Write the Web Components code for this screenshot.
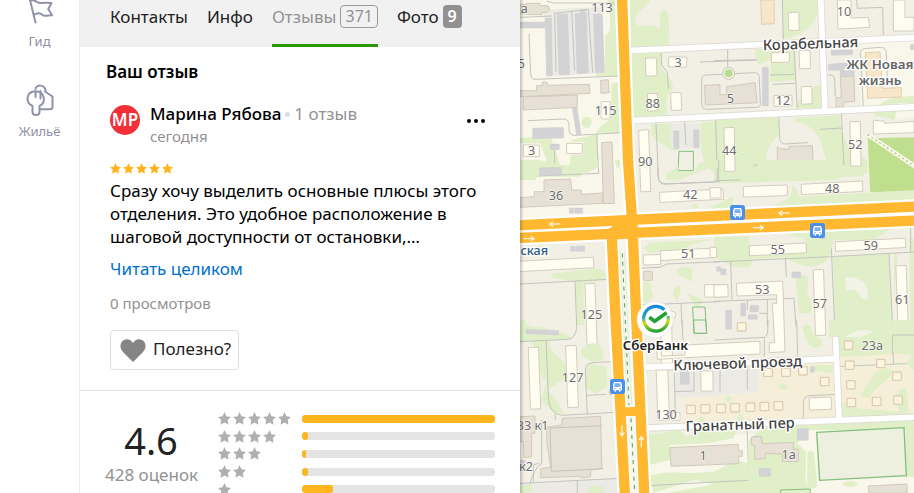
<!DOCTYPE html>
<html lang="ru">
<head>
<meta charset="utf-8">
<title>Отзывы</title>
<style>
html, body { height: 100%; }
body { margin: 0; overflow: hidden; font-family: "Noto Sans", "Open Sans", sans-serif; font-size: 17px; color: #000; background: #fff; }
</style>
</head>
<body>
<app-shell>
  <side-nav slot="nav">
    <nav-item label="Гид" icon="flag"></nav-item>
    <nav-item label="Жильё" icon="keys"></nav-item>
  </side-nav>
  <tab-bar slot="tabs">
    <tab-link>Контакты</tab-link>
    <tab-link>Инфо</tab-link>
    <tab-link active count="371">Отзывы</tab-link>
    <tab-link count="9">Фото</tab-link>
  </tab-bar>
  <review-card slot="content" initials="МР" author="Марина Рябова" total="1 отзыв" date="сегодня">
    Сразу хочу выделить основные плюсы этого отделения. Это удобное расположение в шаговой доступности от остановки,…
  </review-card>
  <rating-summary slot="content" value="4.6" votes="428 оценок"></rating-summary>
  <city-map slot="map"></city-map>
</app-shell>

<script>
const define = (name, render) => customElements.define(name, class extends HTMLElement {
  constructor() {
    super();
    this.attachShadow({ mode: "open" });
  }
  connectedCallback() {
    this.shadowRoot.innerHTML = render(this);
  }
});

define("app-shell", () => `
<style>
:host { display: grid; grid-template-columns: 80px 440px minmax(0, 1fr); height: 100vh; overflow: hidden; }
aside { border-right: 1px solid #ececef; }
main { min-width: 0; overflow: hidden; background: #fff; }
.map { position: relative; overflow: hidden; min-width: 0; }
.map::before { content: ""; position: absolute; z-index: 1; inset: 0 auto 0 0; width: 4px; background: linear-gradient(90deg, rgba(0,0,0,.22), rgba(0,0,0,0)); }
</style>
<aside><slot name="nav"></slot></aside>
<main><slot name="tabs"></slot><slot name="content"></slot></main>
<div class="map"><slot name="map"></slot></div>`);

define("side-nav", () => `
<style>
:host { display: block; overflow: hidden; }
nav { display: flex; flex-direction: column; gap: 30px; margin-top: -10px; }
</style>
<nav aria-label="Разделы"><slot></slot></nav>`);

const navIcons = {
  flag: `<path d="M7.500 7 L13.500 31.500 M8 10 C12 7 15 12.500 19 12 C22 11.500 25 11.700 29.500 12 L26.300 18 L30 24.300 C27 24 24.500 25.500 21.500 24.500 C18.500 22.500 16.500 21 11.500 24"/>`,
  keys: `<path d="M13.500 8 C14 3.500 22.500 3 23.500 9.500 M18.500 10 V17.500 M10.500 25 V31 C10.500 35 17.500 35 17.500 31 V25 M10.500 25 C3 21.500 4 10.500 13.500 10.300 C23 10.500 24.500 21.500 17.500 25 M13.500 10.500 V16 M17.500 28.300 H28 C30 28.300 30.500 27.500 30.500 26 V15.500 L23 10.500"/>`
};
define("nav-item", el => `
<style>
:host { display: block; }
a { display: flex; flex-direction: column; align-items: center; color: #8e91a5; font-size: 13px; line-height: 18px; text-decoration: none; gap: 6px; }
svg { width: 36px; height: 36px; overflow: visible; fill: none; stroke: #9092ab; stroke-width: 2; stroke-linejoin: round; stroke-linecap: round; }
</style>
<a href="#"><svg viewBox="0 -1 36 36" aria-hidden="true">${navIcons[el.getAttribute("icon")]}</svg><span>${el.getAttribute("label")}</span></a>`);

define("tab-bar", () => `
<style>
:host { display: block; background: #f1f1f1; }
nav { display: flex; gap: 19px; padding: 0 30px; height: 47px; }
</style>
<nav aria-label="Карточка места"><slot></slot></nav>`);

define("tab-link", el => {
  const count = el.getAttribute("count");
  return `
<style>
:host { display: flex; }
a { display: flex; gap: 4px; box-sizing: border-box; padding: 5px 0 0; color: #222; text-decoration: none; line-height: 23px; border-bottom: 3px solid transparent; }
:host([active]) a { color: #929292; border-color: #2a9608; }
b { box-sizing: border-box; height: 23px; padding: 0 5px; border-radius: 4px; background: #919191; color: #fff; font-size: 16px; font-weight: 600; }
:host([active]) b { padding: 0 4px; border: 1px solid #999; background: none; color: #929292; line-height: 21px; font-weight: 400; }
</style>
<a href="#"><span><slot></slot></span>${count ? `<b>${count}</b>` : ""}</a>`;
});

const star = "M5 0 L6.500 3.300 L10 3.800 L7.500 6.200 L8.100 9.800 L5 8 L1.900 9.800 L2.500 6.200 L0 3.800 L3.500 3.300 Z";
define("star-row", el => {
  const count = Number(el.getAttribute("count"));
  return `
<style>
:host { display: flex; gap: var(--star-gap, 2px); color: #b0b0b0; }
svg { display: block; width: var(--star-size, 13px); height: var(--star-size, 13px); fill: currentColor; }
</style>${`<svg viewBox="0 0 10 10" aria-hidden="true"><path d="${star}"/></svg>`.repeat(count)}`;
});

define("review-card", el => `
<style>
:host { display: block; border-bottom: 1px solid #e3e3e3; }
h2 { margin: 0; padding: 13px 26px 0; font-size: 17px; line-height: 24px; font-weight: 600; }
article { padding: 18px 30px 20px; }
header { display: grid; grid-template-columns: 30px 1fr auto; column-gap: 10px; align-items: start; }
.avatar { display: grid; place-items: center; height: 30px; margin-top: 3px; border-radius: 50%; background: #f33038; color: #fff; font-size: 17px; line-height: 20px; font-weight: 600; }
.name { line-height: 24px; font-weight: 500; white-space: nowrap; }
.name span { color: #929292; font-weight: 400; }
.name i { display: inline-block; width: 5px; height: 5px; margin: 0 4px 3px; border-radius: 50%; background: #ddd; }
time { display: block; line-height: 20px; color: #929292; font-size: 15px; }
button { font: inherit; cursor: pointer; }
.more { display: flex; gap: 3px; margin: 13px 1px 0 0; padding: 4px; border: 0; background: none; }
.more span { width: 4px; height: 4px; border-radius: 50%; background: #000; }
star-row { --star-size: 11px; --star-gap: 2px; color: #ffb31c; margin: 17px 0 5px; }
p { margin: 0; line-height: 23px; }
a { display: block; width: max-content; margin-top: 9px; line-height: 23px; color: #0070cc; text-decoration: none; }
.views { margin-top: 13px; color: #929292; font-size: 15px; line-height: 20px; }
.useful { display: flex; align-items: center; gap: 7px; height: 40px; margin-top: 17px; padding: 0 7px 3px 9px; border: 1px solid #dedede; border-radius: 4px; background: #fff; color: #222; }
.useful svg { width: 26px; height: 24px; fill: #858585; margin-top: 4px; }
</style>
<h2>Ваш отзыв</h2>
<article>
  <header>
    <div class="avatar">${el.getAttribute("initials")}</div>
    <div><div class="name">${el.getAttribute("author")}<i></i><span>${el.getAttribute("total")}</span></div><time>${el.getAttribute("date")}</time></div>
    <button class="more" aria-label="Ещё"><span></span><span></span><span></span></button>
  </header>
  <star-row count="5" role="img" aria-label="5 из 5"></star-row>
  <p><slot></slot></p>
  <a href="#">Читать целиком</a>
  <div class="views">0 просмотров</div>
  <button class="useful"><svg viewBox="0 0 26 24" aria-hidden="true"><path d="M13 23 L3 13 C-1 9 0 3 4 1 C8 -1 11 1 13 4 C15 1 18 -1 22 1 C26 3 27 9 23 13 Z"/></svg>Полезно?</button>
</article>`);

define("rating-summary", el => `
<style>
:host { display: grid; grid-template-columns: 92px 1fr; column-gap: 21px; padding: 19px 25px 0; }
.score { text-align: center; white-space: nowrap; padding-top: 7px; }
strong { display: block; font-size: 38px; line-height: 46px; font-weight: 400; color: #222; }
small { display: block; font-size: 17px; line-height: 24px; color: #929292; }
ul { display: grid; grid-template-rows: repeat(5, 1fr); height: 88px; margin: 0; padding: 0; list-style: none; }
li { display: grid; grid-template-columns: 74px 1fr; column-gap: 10px; align-items: center; }
.bar { height: 8px; border-radius: 3px; background: #e4e4e4; overflow: hidden; }
.bar div { height: 100%; border-radius: 3px; background: #ffb61c; }
</style>
<div class="score"><strong>${el.getAttribute("value")}</strong><small>${el.getAttribute("votes")}</small></div>
<ul>${[[5, 100], [4, 3], [3, 2], [2, 3], [1, 16]].map(([n, w]) => `<li><star-row count="${n}"></star-row><div class="bar"><div style="width:${w}%"></div></div></li>`).join("")}</ul>`);

const bus = (x, y) => `<g transform="translate(${x} ${y})"><rect width="45" height="45" rx="8" fill="#4a90e8"/><path d="M12 9 H33 L36 17 V34 H31 V38 H27 V34 H18 V38 H14 V34 H9 V17 Z" fill="#fff"/><path d="M14 13 H31 L32 24 H13 Z" fill="#79aef0"/><path d="M13 28 H17 V31 H13 Z M28 28 H32 V31 H28 Z" fill="#4a90e8"/></g>`;
const arrow = (x, y, turn) => `<path class="arrow" transform="translate(${x} ${y}) rotate(${turn})" d="M-16 0 H16 M6 -7 L16 0 L6 7"/>`;
const box = (cls, list) => `<g class="${cls}">${list.map(([x, y, w, h, r = 0]) => `<rect x="${x}" y="${y}" width="${w}" height="${h}" rx="2" transform="rotate(${r} ${x + w / 2} ${y + h / 2})"/>`).join("")}</g>`;
const houseNumbers = [
  [246, 37, "113"], [13, 40, "а"], [4, 204, "5"], [474, 202, "3"], [398, 323, "88"], [257, 346, "115"], [35, 466, "3"], [376, 497, "90"],
  [972, 49, "10"], [631, 310, "5"], [789, 315, "12"], [628, 464, "44"], [1006, 446, "52"],
  [108, 599, "36"], [511, 598, "42"], [505, 775, "51"], [214, 957, "125"],
  [937, 578, "48"], [773, 763, "55"], [1052, 749, "59"], [727, 881, "53"], [899, 923, "57"], [1147, 911, "61"],
  [158, 1145, "127"], [38, 1291, "33 к1"], [18, 1413, "к2"], [549, 1380, "1"], [438, 1257, "130"],
  [1057, 1049, "23а"], [806, 1377, "1а"]
];

define("city-map", () => `
<style>
:host { display: block; height: 100%; }
svg { display: block; width: 100%; height: 100%; font-family: "Noto Sans", sans-serif; }
.g { fill: #e0efc7; } .park { fill: #c0df8e; } .lt { fill: #f9f7ea; } .sand { fill: #f5efd9; } .gr { fill: #ebeae5; }
.w { fill: #fffdf0; stroke: #d4cdbf; stroke-width: 3; }
.b { fill: #e6e1d4; stroke: #d2cabb; stroke-width: 3; }
.s { fill: #d3d3d6; stroke: #c9c9cc; stroke-width: 1; }
.o { fill: #f8e6c8; stroke: #e5cfae; stroke-width: 3; }
.h { fill: #fdf4df; stroke: #ddcfb5; stroke-width: 4; }
.f { fill: none; stroke: #82c07b; stroke-width: 3; }
.path { fill: none; stroke: #c4c4bf; stroke-width: 3; stroke-linejoin: round; }
.case { fill: none; stroke: #dddbd4; stroke-width: 22; stroke-linecap: round; }
.street { fill: none; stroke: #fff; stroke-width: 17; stroke-linecap: round; }
.halo { fill: none; stroke: #fff; stroke-width: 44; }
.main { fill: none; stroke: #ffb830; stroke-width: 31; }
.arrow { fill: none; stroke: #fff3d5; stroke-width: 4; }
.num { font-size: 38px; fill: #6d6d6d; stroke: #fff; stroke-width: 5; stroke-opacity: .7; paint-order: stroke; text-anchor: middle; }
.label { font-size: 44px; font-weight: 500; fill: #444; stroke: #fff; stroke-width: 8; paint-order: stroke; text-anchor: middle; }
.strong { font-size: 40px; font-weight: 600; }
</style>
<svg viewBox="0 0 1182 1479" preserveAspectRatio="xMinYMin slice" role="img" aria-label="Карта">
<defs><linearGradient id="ring" x1=".3" y1="0" x2=".4" y2="1"><stop offset="0" stop-color="#1387dc"/><stop offset=".4" stop-color="#20a6c8"/><stop offset=".65" stop-color="#d8dd16"/><stop offset="1" stop-color="#2ca338"/></linearGradient></defs>
<rect width="1182" height="1479" fill="#f2f0e4"/>

<g>
<path class="lt" d="M0 0 H306 L330 660 H0 Z"/>
<path class="g" d="M262 0 H292 L297 228 H228 V215 L255 218 V110 L270 90 V20 Z M275 250 L296 245 L300 400 H226 L245 375 L272 358 Z M330 0 H390 C385 20 335 40 348 72 C370 90 385 60 420 88 C420 60 415 32 433 30 C450 38 447 55 447 144 L333 144 Z M335 160 H430 L422 200 C440 230 465 240 458 270 C430 290 440 330 445 350 L338 352 Z M395 372 H462 V440 C490 445 480 450 452 452 C430 430 395 420 395 400 Z M545 365 H582 V470 H600 V530 L560 500 C540 470 535 380 545 365 Z"/>
<ellipse class="g" cx="200" cy="367" rx="15" ry="17"/>
<path class="g" d="M0 415 L90 405 L120 495 H150 L155 420 L232 402 L235 480 L180 530 H0 Z"/>
<path class="lt" d="M0 430 H60 L80 480 L50 520 L0 550 Z M140 425 H190 V465 H140 Z"/>
<path class="gr" d="M70 30 L245 20 L255 218 L80 230 Z M450 372 H540 V445 H455 Z"/>
${box("s", [[78, 54, 18, 173, -1], [0, 66, 75, 18], [114, 42, 32, 182, -2], [168, 40, 34, 180, -2], [181, 30, 16, 22], [223, 42, 27, 176, -2], [163, 322, 14, 82, -9], [38, 383, 93, 32, -1], [91, 432, 27, 17], [461, 392, 16, 54, -1], [521, 389, 16, 54, -1]])}
<path class="b" d="M0 13 H20 V10 H60 V17 H84 L89 28 L82 37 H66 V44 H22 V42 H0 Z M0 272 H50 V257 H66 L68 246 H80 L84 256 L208 253 L210 280 L0 290 Z M10 291 L172 285 V322 L10 330 Z M242 241 L265 239 L268 278 L243 280 Z M245 428 L276 426 L283 610 L250 611 Z M554 256 L600 254 V284 H620 V260 L705 248 L712 308 L556 315 Z"/>
${box("w", [[377, 174, 33, 54, -2], [446, 171, 54, 30, 2], [383, 281, 30, 52, -2], [453, 278, 31, 53, -2], [243, 305, 27, 52], [359, 390, 30, 185, -2], [10, 435, 48, 34, 1], [140, 430, 47, 31, 1]])}
<path class="path" d="M0 52 L95 48 M80 3 L100 9 H290 M108 216 L104 40 L205 28 L218 218 M155 36 L164 212 M27 100 L32 220 Q33 238 45 238 L296 228 M24 362 L130 357 Q146 356 147 376 V390 Q148 406 165 406 L305 398 M230 402 L236 520 L0 530 M104 450 V490 M423 158 L425 195 L441 215 L446 266 M540 186 L712 180 M550 325 Q545 320 545 300 V238 Q545 225 560 225 L704 218 Q718 218 718 235 L721 315 Q720 322 710 322 L560 328 Z M408 370 L415 530 Q416 550 435 552 L600 545 M494 365 L498 435 M588 360 L596 545"/>
<path class="f" d="M477 454 H520 V512 L474 512 Z"/>
</g>

<g transform="translate(582 0)">
<path class="g" d="M205 0 H312 L310 40 C300 80 260 110 205 118 Z M122 147 H245 V240 L168 246 L170 180 L130 196 Z M246 310 L300 260 L325 250 V325 H250 Z M0 360 L190 353 L200 400 C170 430 145 450 165 500 C180 540 390 500 395 525 L370 540 L0 550 Z M240 355 L380 345 C370 400 400 450 460 480 L460 520 H350 C320 450 330 380 245 365 Z M480 340 L500 300 L580 290 L600 330 Z"/>
<path class="lt" d="M440 120 H600 V350 L545 360 L540 325 H440 Z"/>
<path class="g" d="M480 345 C490 290 560 290 600 288 V310 H550 L542 360 Z"/>
<path class="park" d="M461 415 L600 412 V573 L469 577 Z"/>
<path d="M461 404 L604 500" fill="none" stroke="#f6f8e5" stroke-width="14"/><path d="M461 404 L604 500" fill="none" stroke="#a0c783" stroke-width="4" stroke-dasharray="5 9"/>
<circle cx="44" cy="220" r="18" fill="#f4f3e6" stroke="#c4c4bf" stroke-width="3"/><circle cx="44" cy="220" r="12" fill="#b9dc91"/>
<path class="path" d="M205 0 L208 118 M240 145 L250 325 M168 225 L240 223 M175 253 L245 250 M0 182 L130 179 M41 145 V200 M428 0 L430 25 L506 22 L508 105 M343 225 Q362 223 362 240 L364 290 M448 320 L440 160 Q440 145 460 145 L500 142 Q516 142 517 160 L520 240 M194 350 L197 415 Q198 432 215 432 L282 428 M318 388 L384 384 M382 340 L391 525 L0 543 M5 360 L10 540"/>
${box("s", [[145, 202, 18, 116], [351, 150, 65, 15, -2], [589, 133, 20, 16], [120, 494, 14, 17]])}
<path class="s" d="M343 193 L420 186 L421 227 H378 V211 H343 Z"/>
<path class="o" d="M140 0 H180 L181 71 L143 73 Z M454 158 L498 156 L505 265 L562 263 V291 L461 295 Z"/>
<path class="b" d="M379 229 H420 L422 304 L388 307 V321 H366 V293 H382 Z M190 440 L200 447 H226 V439 L295 437 L297 484 L190 489 Z"/>
<path class="w" d="M370 0 H411 V54 L463 52 L467 82 L372 87 Z M538 0 H573 V52 H600 V93 H538 Z M478 361 L510 363 L512 370 L600 364 V398 L478 402 Z"/>
${box("w", [[223, 37, 32, 54, -2], [172, 158, 54, 29, -1], [256, 151, 33, 55, -2], [262, 260, 32, 52, -2], [180, 286, 54, 32, -1], [31, 383, 31, 131, -1], [409, 365, 31, 133, -1]])}
</g>

<g transform="translate(0 480)">
<path class="g" d="M0 10 L90 5 C80 50 50 40 45 60 H0 Z M175 0 H233 L236 20 L190 45 Z M285 0 H300 V20 L290 25 Z M440 40 Q465 30 475 15 V35 H525 L535 10 L595 0 V25 H565 L470 62 L438 58 Z M0 0 H60 L90 10 L50 50 H0 Z M510 139 Q525 122 538 139 Q525 156 510 139 Z M570 140 L640 110 V135 L600 155 Z M370 265 L390 248 L582 238 L510 255 L500 270 L425 272 L390 280 Z M90 342 L230 325 L262 340 L260 360 L170 372 C140 350 100 365 90 342 Z M166 363 H190 L192 495 H170 Z M372 365 H390 L400 410 L380 430 L365 420 Z M470 330 Q490 315 515 325 L518 365 Q480 350 470 340 Z M458 400 Q480 350 482 400 L470 425 Z M500 400 L540 415 L550 425 L530 440 Z"/>
${box("s", [[58, 23, 67, 23, -1], [148, 144, 12, 16], [163, 144, 25, 16], [152, 259, 14, 15], [169, 258, 25, 16]])}
<path class="b" d="M0 113 L43 110 V95 H72 V60 L152 57 L155 90 H184 V103 L248 99 V130 L0 142 Z"/>
${box("b", [[371, 334, 26, 27]])}
<path class="path" d="M413 20 L415 55 Q417 72 435 72 L600 65 M356 325 L420 322 L440 312 L600 305 M0 372 L262 358 M165 365 L170 495 M358 435 L600 425 M483 430 L486 495"/>
${box("w", [[419, 92, 191, 31, -3], [421, 268, 169, 29, -3], [370, 284, 52, 30, -2], [-10, 298, 231, 31, -3], [198, 371, 30, 184, -2], [554, 374, 60, 37, -1]])}
<path class="f" d="M518 441 H555 L560 520 H522 Z"/>
<path class="w" d="M440 455 L450 450 L466 458 V472 L455 476 L458 630 H424 V480 Z"/>
</g>

<g transform="translate(582 480)">
<path class="g" d="M235 75 Q250 85 255 110 L600 90 V130 L160 148 L230 110 Z M80 40 L165 0 H370 L395 20 L450 35 V48 L395 52 L270 60 L80 62 Z M0 230 L105 228 L108 265 L280 250 L270 235 L210 222 L530 205 L480 240 L360 240 L350 280 C320 350 240 310 210 290 L115 300 C115 340 60 325 0 290 Z M357 290 L525 280 L535 500 H362 Z M540 280 L552 290 L545 330 L540 440 Z M245 355 Q270 335 282 355 L280 400 Q300 430 290 460 L255 460 Z M585 235 H600 V495 H590 Z"/>
<path fill="#f3f2e6" d="M393 352 Q425 350 440 362 Q466 372 460 420 L443 415 L425 390 L395 392 Z"/>
<path class="path" d="M0 306 L350 290 L600 276 M14 0 V65 M352 265 L362 500 M525 280 L536 500 M214 292 L217 350 M50 305 L54 420 M0 424 L240 415 L246 500 M590 195 V275 M100 420 V450 M135 460 H160 M160 420 V500"/>
${box("s", [[233, 336, 27, 17], [8, 320, 12, 14], [20, 326, 16, 18], [80, 430, 15, 38], [108, 436, 26, 20], [102, 464, 28, 14], [35, 450, 18, 58], [315, 225, 18, 11]])}
${box("w", [[-12, 83, 33, 31, -2], [88, 77, 132, 32, -2], [262, 68, 184, 31, -3], [106, 253, 171, 30, -3], [364, 240, 211, 28, -3], [-12, 262, 20, 31], [301, 329, 31, 197, -2], [549, 317, 31, 197, -2], [0, 374, 42, 37, -2]])}
<path class="w" d="M67 370 L206 363 L213 575 L166 578 V548 H182 L175 430 H188 V404 L69 408 Z"/>
</g>

<g transform="translate(0 960)">
<path class="gr" d="M0 490 L172 480 L295 475 V519 H0 Z"/>
<path class="lt" d="M378 380 L394 362 L1182 310 V519 H390 Z"/>
<path class="sand" d="M490 233 L945 205 L940 50 L1182 30 V290 L500 318 Z M715 140 L945 120 V210 L715 220 Z"/>
<path class="gr" d="M465 155 L715 140 V215 L465 235 Z"/>
<path class="g" d="M0 0 H15 Q15 25 60 20 L145 45 L155 58 L85 62 C95 110 145 120 150 165 L80 210 C120 240 115 275 140 280 H105 Q70 250 60 240 L80 190 Q50 160 55 100 L30 60 L0 70 Z M182 100 C190 60 250 60 250 100 L248 120 L225 126 Q200 125 182 100 Z M205 130 L260 140 L262 200 L225 223 L195 200 Q200 145 205 130 Z M385 0 H410 V15 H390 Z M385 345 L480 330 L500 350 L550 330 H650 L640 355 L560 370 L450 375 V420 L388 435 Z M390 468 Q440 450 500 460 L582 455 L650 420 L720 440 L740 480 L582 495 L525 480 L400 519 Z M0 500 L35 490 L40 510 L20 519 H0 Z M205 500 L250 498 V519 H205 Z M440 519 L600 490 L700 485 H760 L840 500 V519 Z M520 315 L545 288 L560 310 Z M643 310 L660 280 L680 310 Z"/>
<path class="path" d="M0 65 L145 58 Q165 55 170 25 V0 M78 62 L86 240 Q90 280 125 286 L288 277 M30 490 Q45 440 65 430 V300 M55 430 L40 435 V485 M202 285 L196 150 Q198 128 220 128 L275 125 M200 226 L260 223 M0 490 L300 475 M172 480 V519 M106 280 V300 M463 160 L466 280 M463 215 L522 213 V145 M385 497 L600 485 L830 475 M486 0 L489 60 M600 145 V215 M682 120 V210 M940 140 L1182 130 M1120 30 V135 M944 0 V60 M830 0 L833 110 M582 60 L735 52 Q745 50 744 0 M733 55 V110 M681 320 L687 480 M850 295 V245 Q852 228 870 227 L945 223"/>
${box("s", [[18, 30, 98, 13, 2], [481, 150, 27, 43], [0, 340, 12, 14], [0, 420, 16, 30], [268, 208, 10, 18]])}
<path class="b" d="M0 290 L45 288 V340 H35 V410 L12 413 L10 365 H0 Z M127 295 L242 289 V316 L246 446 L212 450 V470 L185 474 L182 469 L62 473 V446 L92 442 L80 365 V322 L125 315 Z M449 383 L655 373 V392 H667 V409 H656 V431 L453 439 Z"/>
<path class="path" d="M92 324 L246 317 M90 322 L94 454 L250 446"/>
${box("w", [[28, 82, 31, 185, -2], [140, 77, 32, 185, -2], [456, 278, 24, 23], [411, 150, 35, 150, -2], [543, 153, 36, 60, -1]])}
<path class="w" d="M411 85 L424 84 V108 L495 105 V75 L720 64 V102 L500 113 L412 118 Z"/>
<path class="f" d="M521 0 H557 L560 40 H522 Z"/>
${box("h", [[500, 256, 26, 25], [543, 254, 26, 25]])}
</g>

<g transform="translate(582 960)">
<path class="g" d="M345 0 H535 L530 100 L470 108 L375 110 L365 55 L345 50 Z M265 20 Q275 5 292 20 Q290 45 325 60 Q325 85 300 85 Q270 65 265 20 Z M385 287 V245 L430 265 L600 280 V288 Z M442 228 C450 190 475 185 480 158 Q510 140 535 150 C535 180 490 190 465 235 Z M540 230 Q560 205 575 205 L585 270 L560 285 Z M535 0 H600 V105 L535 100 Z M575 130 L600 100 V150 Z M130 335 L180 310 L600 300 V519 H570 L575 330 L285 330 L250 370 L280 400 L275 480 L290 519 H100 L105 360 Z M32 235 Q45 215 55 240 L40 248 Z M193 200 Q207 180 220 202 Q207 218 193 200 Z M290 135 H355 L355 160 L290 150 Z"/>
<path fill="#f3f2e6" d="M392 52 Q430 20 480 35 L440 52 Z"/>
<path class="lt" d="M300 340 L320 480 L430 500 L460 480 L600 470 V519 H292 L275 490 V400 Z"/>
<path class="g" d="M280 395 Q295 390 300 400 L310 500 Q295 510 280 500 Z M383 493 Q405 475 433 490 Q420 510 383 493 Z"/>
<path d="M308 337 L570 323 L577 467 L317 481 Z" fill="#edf0df" stroke="#82c07b" stroke-width="4"/>
<path class="f" d="M200 519 L199 510 L289 507 V519"/>
<path class="path" d="M535 105 V45 H600"/>
${box("s", [[250, 326, 33, 35], [135, 445, 35, 24], [289, 140, 12, 17]])}
<path class="b" d="M112 351 L142 349 L145 371 L238 367 V388 H253 V425 H206 V402 L154 400 V415 L122 418 V378 L112 373 Z M463 498 L579 492 V519 H465 Z"/>
${box("w", [[286, 232, 66, 37, -2]])}
${box("h", [[70, 8, 26, 25], [391, 63, 25, 25], [394, 123, 26, 25], [488, 118, 25, 25], [536, 156, 26, 25], [398, 182, 25, 25], [399, 235, 26, 25], [475, 232, 26, 25], [539, 228, 26, 25], [149, 145, 26, 25], [203, 144, 26, 25], [254, 140, 26, 25], [319, 172, 26, 25], [8, 253, 26, 25], [50, 251, 26, 25], [96, 249, 26, 25], [138, 247, 26, 25], [180, 245, 26, 25]])}
</g>

<path class="case" d="M325 152 L1200 112 M335 362 L1200 320 M902 -10 L915 330 M370 1102 L948 1076 M947 1018 L957 1255 M378 1284 L1200 1251"/>
<path class="street" d="M325 152 L1200 112 M335 362 L1200 320 M902 -10 L915 330 M370 1102 L948 1076 M947 1018 L957 1255 M378 1284 L1200 1251"/>
<path class="halo" d="M306 -10 L324 480 L338 690 L349 960 L373 1490 M275 710 L287 960 L315 1490 M-10 676 L1200 619 M-10 714 L1200 661"/>
<path fill="#f7f7ee" d="M296 715 L315 715 L354 1479 H334 Z"/>
<path class="main" d="M306 -10 L324 480 L338 690 L349 960 L373 1490 M275 700 L287 960 L315 1490 M-10 676 L1200 619 M-10 714 L1200 661"/>
<path fill="#ffb830" d="M262 690 L290 670 L340 665 L345 715 L262 720 Z M298 1223 L355 1220 V1248 H300 Z"/>
<path d="M307 760 L327 1215 M333 1255 L344 1479" fill="none" stroke="#499c4e" stroke-width="3" stroke-dasharray="12 13"/>
<path d="M300 755 L322 1215 M313 755 L335 1215" fill="none" stroke="#b8d9a8" stroke-width="1"/>
${arrow(105, 672, 178)}${arrow(26, 716, 0)}${arrow(793, 639, 178)}${arrow(714, 683, 0)}${arrow(306, 1292, 90)}${arrow(364, 1326, -90)}
${bus(630, 615)}${bus(870, 669)}${bus(270, 1137)}

${houseNumbers.map(([x, y, t]) => `<text class="num" x="${x}" y="${y}">${t}</text>`).join("")}
<text class="label" transform="translate(872 146) rotate(-2)">Корабельная</text>
<text class="label strong" style="fill:#666"><tspan x="1080" y="206">ЖК Новая</tspan><tspan x="1080" y="255">жизнь</tspan></text>
<text class="label" x="43" y="764" style="fill:#2f5d84;font-size:38px">ская</text>
<text class="label" transform="translate(654 1105) rotate(-2)">Ключевой проезд</text>
<text class="label" transform="translate(661 1289) rotate(-2)">Гранатный пер</text>
<circle cx="405" cy="959" r="54" fill="#fff" stroke="#e4e4df" stroke-width="2"/>
<path d="M433 929 A37 37 0 1 0 444 948" fill="none" stroke="url(#ring)" stroke-width="10"/>
<path d="M388 952 L404 964 L440 938" fill="none" stroke="#21a038" stroke-width="11"/>
<text class="label strong" x="406" y="1050" style="fill:#222">СберБанк</text>
</svg>`);
</script>
</body>
</html>
